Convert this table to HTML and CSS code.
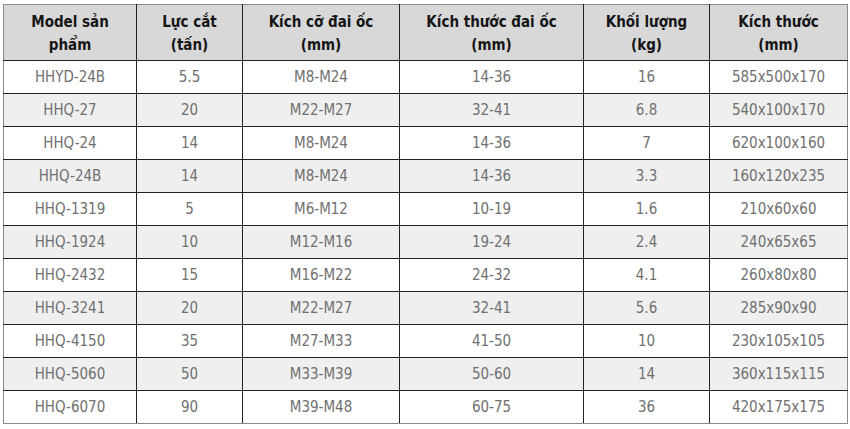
FILE: index.html
```html
<!DOCTYPE html>
<html>
<head>
<meta charset="utf-8">
<link rel="stylesheet" href="styles.css">
</head>
<body>
<table class="spec">
  <colgroup>
    <col class="c1"><col class="c2"><col class="c3"><col class="c4"><col class="c5"><col class="c6">
  </colgroup>
  <thead>
    <tr>
      <th>Model sản<br>phẩm</th>
      <th>Lực cắt<br>(tấn)</th>
      <th>Kích cỡ đai ốc<br>(mm)</th>
      <th>Kích thước đai ốc<br>(mm)</th>
      <th>Khối lượng<br>(kg)</th>
      <th>Kích thước<br>(mm)</th>
    </tr>
  </thead>
  <tbody>
    <tr><td>HHYD-24B</td><td>5.5</td><td>M8-M24</td><td>14-36</td><td>16</td><td>585x500x170</td></tr>
    <tr><td>HHQ-27</td><td>20</td><td>M22-M27</td><td>32-41</td><td>6.8</td><td>540x100x170</td></tr>
    <tr><td>HHQ-24</td><td>14</td><td>M8-M24</td><td>14-36</td><td>7</td><td>620x100x160</td></tr>
    <tr><td>HHQ-24B</td><td>14</td><td>M8-M24</td><td>14-36</td><td>3.3</td><td>160x120x235</td></tr>
    <tr><td>HHQ-1319</td><td>5</td><td>M6-M12</td><td>10-19</td><td>1.6</td><td>210x60x60</td></tr>
    <tr><td>HHQ-1924</td><td>10</td><td>M12-M16</td><td>19-24</td><td>2.4</td><td>240x65x65</td></tr>
    <tr><td>HHQ-2432</td><td>15</td><td>M16-M22</td><td>24-32</td><td>4.1</td><td>260x80x80</td></tr>
    <tr><td>HHQ-3241</td><td>20</td><td>M22-M27</td><td>32-41</td><td>5.6</td><td>285x90x90</td></tr>
    <tr><td>HHQ-4150</td><td>35</td><td>M27-M33</td><td>41-50</td><td>10</td><td>230x105x105</td></tr>
    <tr><td>HHQ-5060</td><td>50</td><td>M33-M39</td><td>50-60</td><td>14</td><td>360x115x115</td></tr>
    <tr><td>HHQ-6070</td><td>90</td><td>M39-M48</td><td>60-75</td><td>36</td><td>420x175x175</td></tr>
  </tbody>
</table>
</body>
</html>
```
FILE: styles.css
```css
html, body {
  margin: 0;
  padding: 0;
  background: #ffffff;
}
body {
  padding: 4px 3px 0 3px;
  font-family: "DejaVu Sans", "Liberation Sans", sans-serif;
  font-stretch: condensed;
}
.spec {
  border-collapse: collapse;
  table-layout: fixed;
  width: 844px;
  border: 1px solid #8a8a8a;
}
.c1 { width: 133px; }
.c2 { width: 106px; }
.c3 { width: 157px; }
.c4 { width: 184px; }
.c5 { width: 126px; }
.c6 { width: 138px; }
.spec th, .spec td {
  border: 1px solid #222;
  text-align: center;
  padding: 0;
}
.spec th {
  background: #d8d8d8;
  color: #151515;
  font-weight: bold;
  font-size: 15px;
  line-height: 23px;
  height: 56px;
  padding-top: 2px;
  box-sizing: border-box;
  border-top-color: #8a8a8a;
}
.spec td {
  color: #707070;
  font-size: 15px;
  height: 32px;
}
.spec tbody tr:nth-child(even) td {
  background: #efefef;
}
.spec tr > :first-child { border-left-color: #8a8a8a; }
.spec tr > :last-child { border-right-color: #8a8a8a; }
.spec tbody tr:last-child td { border-bottom-color: #8a8a8a; }
```
